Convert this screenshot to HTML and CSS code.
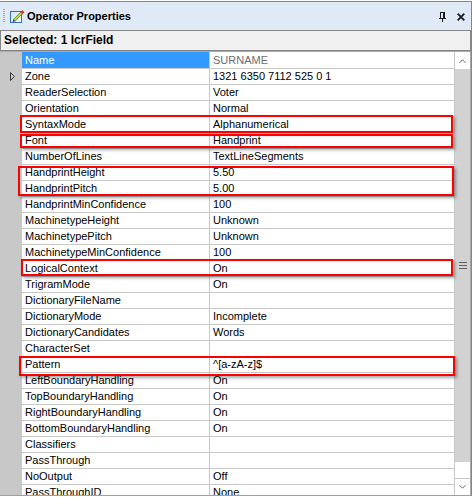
FILE: index.html
```html
<!DOCTYPE html>
<html>
<head>
<meta charset="utf-8">
<title>Operator Properties</title>
<link rel="stylesheet" href="styles.css">
</head>
<body>
<div class="panel">
  <div class="titlebar">
    <span class="grip"></span>
    <svg class="app-icon" width="15" height="15" viewBox="0 0 15 15">
      <defs>
        <linearGradient id="doc" x1="0" y1="0" x2="1" y2="1">
          <stop offset="0" stop-color="#cfe3fb"/>
          <stop offset="1" stop-color="#ffffff"/>
        </linearGradient>
      </defs>
      <rect x="0.5" y="2.5" width="11" height="11" fill="url(#doc)" stroke="#2f6fc4"/>
      <path d="M4 11.5 L11.5 4" stroke="#5f9a25" stroke-width="3"/>
      <path d="M4 11.5 L11.5 4" stroke="#e9dc5a" stroke-width="1.1"/>
      <path d="M2.6 13 L3.4 10.2 L5.4 12.2 Z" fill="#3a3a3a"/>
      <path d="M11.3 4.2 L13.4 2.1" stroke="#d9342b" stroke-width="3"/>
    </svg>
    <span class="title">Operator Properties</span>
    <span class="spacer"></span>
    <svg class="pin" width="7" height="10" viewBox="0 0 7 10">
      <rect x="1" y="0" width="5" height="1" fill="#1e1e1e"/>
      <rect x="1" y="0" width="1" height="6" fill="#1e1e1e"/>
      <rect x="4" y="0" width="2" height="6" fill="#1e1e1e"/>
      <rect x="0" y="6" width="7" height="1" fill="#1e1e1e"/>
      <rect x="3" y="7" width="1" height="3" fill="#1e1e1e"/>
    </svg>
    <svg class="close" width="8" height="8" viewBox="0 0 8 8">
      <path d="M0.7 0.7 L7.3 7.3 M7.3 0.7 L0.7 7.3" stroke="#1e1e1e" stroke-width="1.9"/>
    </svg>
  </div>
  <div class="selbar">Selected: 1 IcrField</div>
  <div class="grid">
    <div class="rows">
      <div class="row first selected"><span class="margin"></span><span class="name">Name</span><span class="value readonly">SURNAME</span></div>
      <div class="row"><span class="margin"><svg class="expander" width="7" height="11" viewBox="0 0 7 11"><path d="M1.5 1.5 L5.5 5.5 L1.5 9.5 Z" fill="none" stroke="#3c3c3c"/></svg></span><span class="name">Zone</span><span class="value">1321 6350 7112 525 0 1</span></div>
      <div class="row"><span class="margin"></span><span class="name">ReaderSelection</span><span class="value">Voter</span></div>
      <div class="row"><span class="margin"></span><span class="name">Orientation</span><span class="value">Normal</span></div>
      <div class="row"><span class="margin"></span><span class="name">SyntaxMode</span><span class="value">Alphanumerical</span></div>
      <div class="row"><span class="margin"></span><span class="name">Font</span><span class="value">Handprint</span></div>
      <div class="row"><span class="margin"></span><span class="name">NumberOfLines</span><span class="value">TextLineSegments</span></div>
      <div class="row"><span class="margin"></span><span class="name">HandprintHeight</span><span class="value">5.50</span></div>
      <div class="row"><span class="margin"></span><span class="name">HandprintPitch</span><span class="value">5.00</span></div>
      <div class="row"><span class="margin"></span><span class="name">HandprintMinConfidence</span><span class="value">100</span></div>
      <div class="row"><span class="margin"></span><span class="name">MachinetypeHeight</span><span class="value">Unknown</span></div>
      <div class="row"><span class="margin"></span><span class="name">MachinetypePitch</span><span class="value">Unknown</span></div>
      <div class="row"><span class="margin"></span><span class="name">MachinetypeMinConfidence</span><span class="value">100</span></div>
      <div class="row"><span class="margin"></span><span class="name">LogicalContext</span><span class="value">On</span></div>
      <div class="row"><span class="margin"></span><span class="name">TrigramMode</span><span class="value">On</span></div>
      <div class="row"><span class="margin"></span><span class="name">DictionaryFileName</span><span class="value"></span></div>
      <div class="row"><span class="margin"></span><span class="name">DictionaryMode</span><span class="value">Incomplete</span></div>
      <div class="row"><span class="margin"></span><span class="name">DictionaryCandidates</span><span class="value">Words</span></div>
      <div class="row"><span class="margin"></span><span class="name">CharacterSet</span><span class="value"></span></div>
      <div class="row"><span class="margin"></span><span class="name">Pattern</span><span class="value">^[a-zA-z]$</span></div>
      <div class="row"><span class="margin"></span><span class="name">LeftBoundaryHandling</span><span class="value">On</span></div>
      <div class="row"><span class="margin"></span><span class="name">TopBoundaryHandling</span><span class="value">On</span></div>
      <div class="row"><span class="margin"></span><span class="name">RightBoundaryHandling</span><span class="value">On</span></div>
      <div class="row"><span class="margin"></span><span class="name">BottomBoundaryHandling</span><span class="value">On</span></div>
      <div class="row"><span class="margin"></span><span class="name">Classifiers</span><span class="value"></span></div>
      <div class="row"><span class="margin"></span><span class="name">PassThrough</span><span class="value"></span></div>
      <div class="row"><span class="margin"></span><span class="name">NoOutput</span><span class="value">Off</span></div>
      <div class="row"><span class="margin"></span><span class="name">PassThroughID</span><span class="value">None</span></div>
    </div>
    <div class="scrollbar">
      <div class="sb-btn sb-up">
        <svg width="7" height="4" viewBox="0 0 7 4"><path d="M0.5 3.8 L3.5 0.8 L6.5 3.8" fill="none" stroke="#606060"/></svg>
      </div>
      <div class="sb-thumb">
        <svg width="8" height="7" viewBox="0 0 8 7"><path d="M0 0.5 H8 M0 3.5 H8 M0 6.5 H8" stroke="#606060"/></svg>
      </div>
      <div class="sb-track"></div>
      <div class="sb-btn sb-down">
        <svg width="7" height="4" viewBox="0 0 7 4"><path d="M0.5 0.2 L3.5 3.2 L6.5 0.2" fill="none" stroke="#606060"/></svg>
      </div>
    </div>
  </div>
</div>
<div class="mark mark-syntax"></div>
<div class="mark mark-font"></div>
<div class="mark mark-handprint"></div>
<div class="mark mark-logical"></div>
<div class="mark mark-pattern"></div>
</body>
</html>
```
FILE: styles.css
```css
html, body {
  margin: 0;
  padding: 0;
  background: #ffffff;
}
body {
  width: 473px;
  height: 497px;
  overflow: hidden;
  position: relative;
  font-family: "Liberation Sans", Arial, sans-serif;
  font-size: 11px;
  color: #000000;
}
.panel {
  width: 471px;
  margin-top: 1px;
  border-top: 1px solid #3c96ee;
  border-right: 1px solid #3c96ee;
}
.titlebar {
  height: 28px;
  background: #e0eaf6;
  display: flex;
  align-items: center;
}
.grip {
  width: 2px;
  height: 14px;
  margin-left: 3px;
  background: repeating-linear-gradient(to bottom, #9aa7ba 0 1px, transparent 1px 2px);
}
.app-icon {
  margin-left: 5px;
  flex: none;
}
.title {
  margin-left: 2px;
  font-weight: bold;
  font-size: 11px;
  color: #000;
}
.spacer {
  flex: 1;
}
.pin {
  flex: none;
  margin-top: 2px;
}
.close {
  flex: none;
  margin-left: 11px;
  margin-right: 6px;
  margin-top: 1px;
}
.selbar {
  height: 19px;
  line-height: 19px;
  border: 1px solid #868686;
  background: #f0f0f0;
  padding-left: 3px;
  font-weight: bold;
  font-size: 12px;
}
.grid {
  display: flex;
  border-top: 1px solid #a9a9a9;
  border-bottom: 1px solid #a0a0a0;
  height: 443px;
}
.rows {
  width: 454px;
  height: 443px;
  overflow: hidden;
  flex: none;
}
.row {
  display: flex;
  height: 15px;
  line-height: 15px;
  border-bottom: 1px solid #c8c8c8;
  white-space: nowrap;
}
.row.first {
  height: 16px;
  line-height: 16px;
}
.margin {
  width: 22px;
  flex: none;
  background: #c8c8c8;
  display: flex;
  align-items: center;
  padding-left: 0;
}
.expander {
  margin-left: 9px;
}
.name {
  width: 184px;
  flex: none;
  padding-left: 3px;
  border-right: 1px solid #c8c8c8;
  overflow: hidden;
}
.value {
  flex: 1;
  padding-left: 3px;
  overflow: hidden;
}
.row.selected .name {
  background: #3399ff;
  color: #ffffff;
}
.value.readonly {
  color: #6d6d6d;
}
.scrollbar {
  width: 15px;
  flex: none;
  border-left: 1px solid #c8c8c8;
  border-right: 1px solid #a8a8a8;
  display: flex;
  flex-direction: column;
}
.sb-btn {
  background: #ffffff;
  display: flex;
  align-items: center;
  justify-content: center;
}
.sb-up {
  height: 17px;
}
.sb-thumb {
  height: 393px;
  background: #d2d2d2;
  display: flex;
  align-items: center;
  justify-content: center;
}
.sb-track {
  height: 16px;
  background: #ffffff;
}
.sb-down {
  height: 16px;
  border-top: 1px solid #c8c8c8;
}
.mark {
  position: absolute;
  border: 2px solid #ff0000;
  box-sizing: border-box;
  box-shadow: 2px 2px 3px rgba(0, 0, 0, 0.35);
}
.mark-syntax {
  left: 20px;
  top: 115px;
  width: 433px;
  height: 18px;
}
.mark-font {
  left: 20px;
  top: 134px;
  width: 433px;
  height: 14px;
}
.mark-handprint {
  left: 18px;
  top: 166px;
  width: 436px;
  height: 30px;
}
.mark-logical {
  left: 21px;
  top: 259px;
  width: 432px;
  height: 17px;
}
.mark-pattern {
  left: 19px;
  top: 356px;
  width: 436px;
  height: 20px;
}
```
